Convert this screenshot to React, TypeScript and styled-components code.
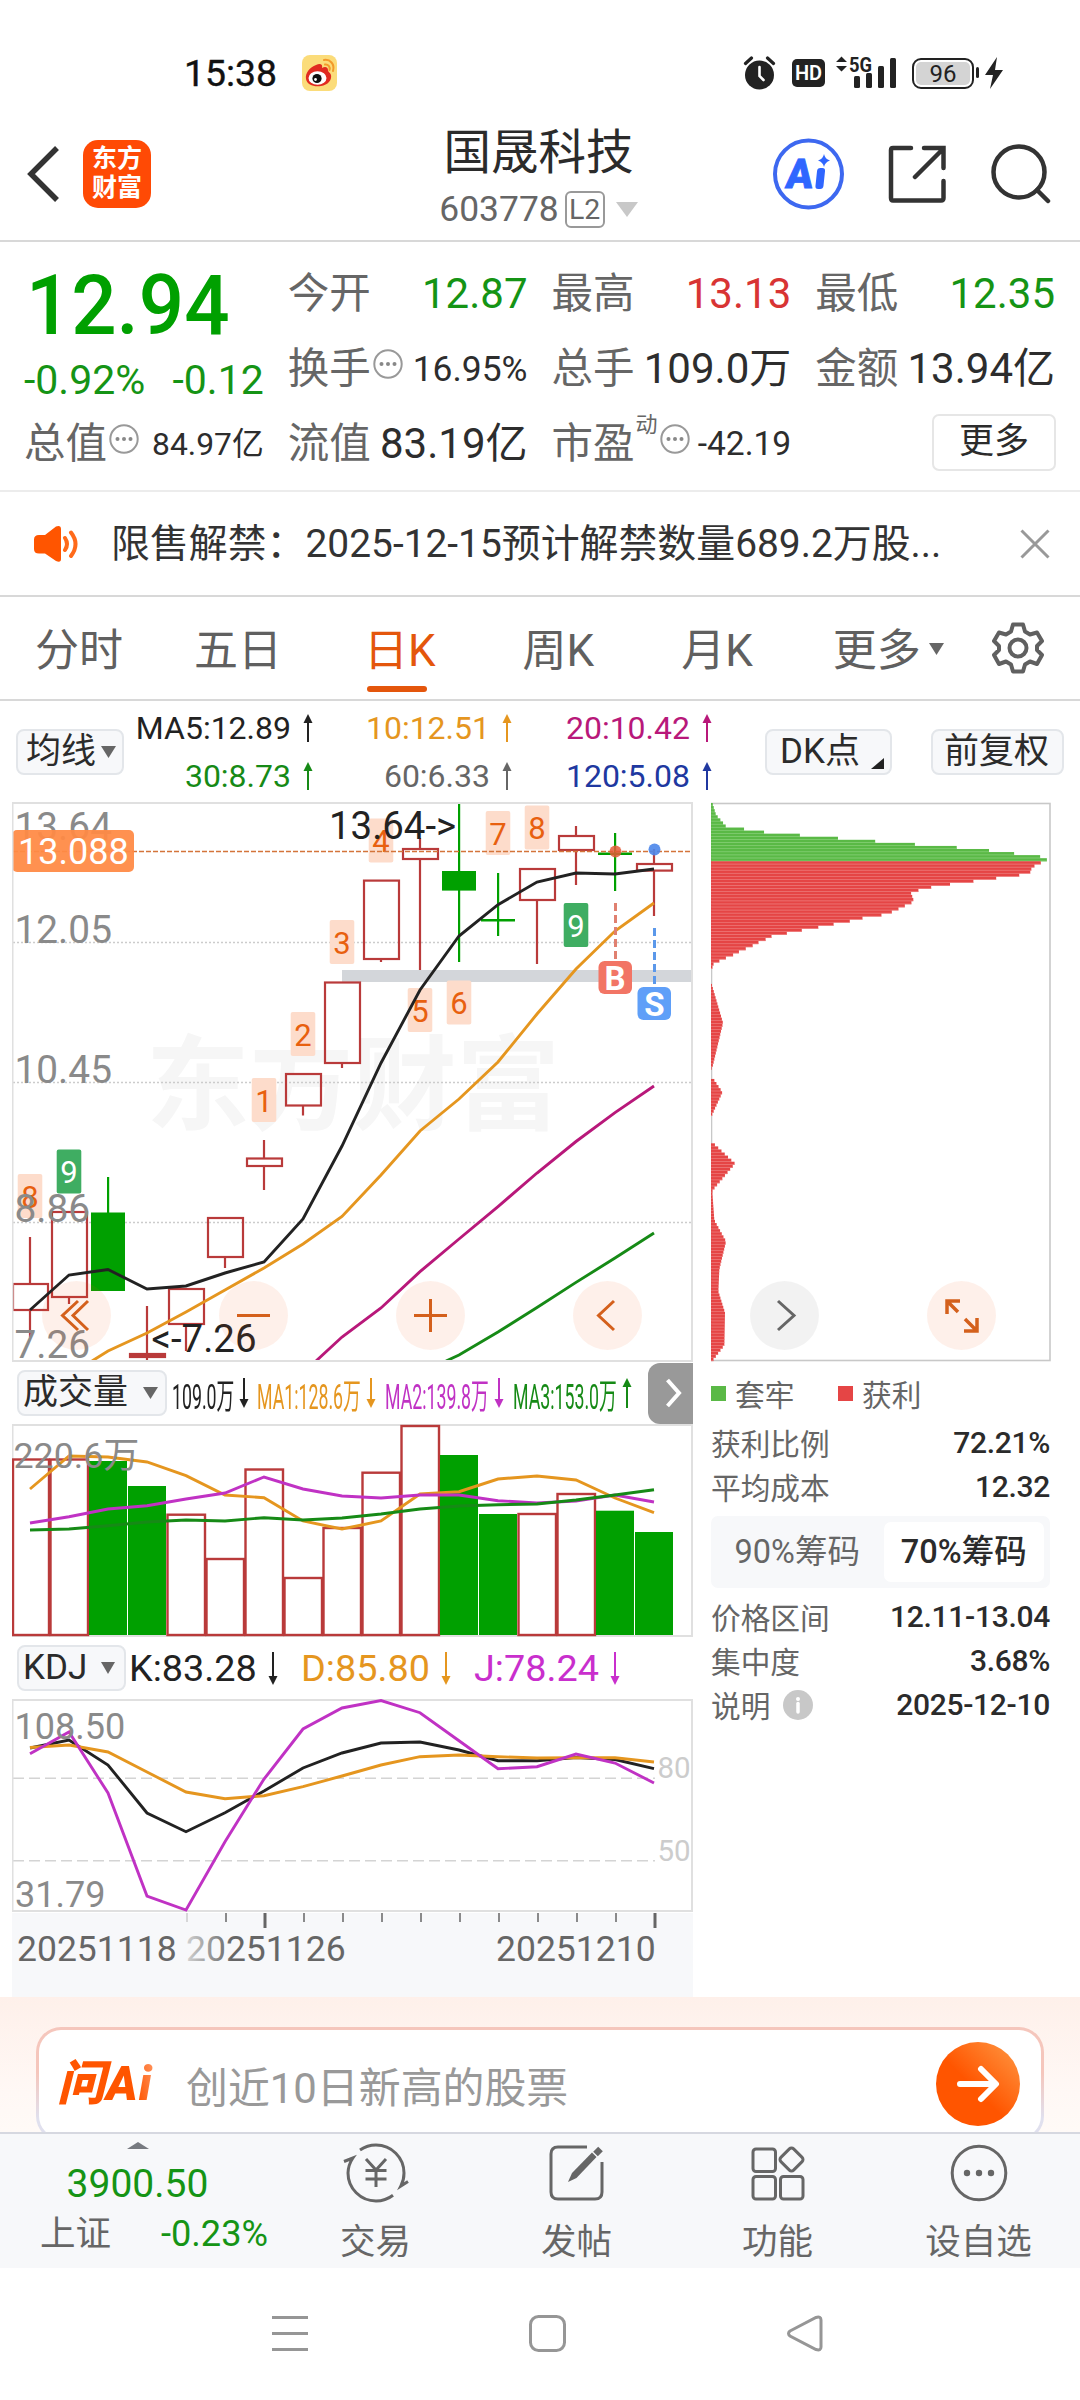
import React from "react";
import styled, { createGlobalStyle } from "styled-components";

const SANS = `Roboto, "Noto Sans CJK SC", sans-serif`;
const RED = "#b93a3a";
const GREEN = "#00a000";
const ORANGE = "#e5961f";

const Global = createGlobalStyle`
  * { box-sizing: border-box; }
  body { margin: 0; background: #fff; font-family: ${SANS}; color: #333; }
  svg { display: block; flex: none; }
  svg text { font-family: ${SANS}; }
`;

const Screen = styled.div`
  width: 1080px;
  height: 2400px;
  display: flex;
  flex-direction: column;
  overflow: hidden;
  background: #fff;
`;

/* ---------- status bar ---------- */
const StatusBar = styled.div`
  height: 110px;
  padding: 36px 76px 0 184px;
  display: flex;
  align-items: center;
  justify-content: space-between;
`;
const StatusGroup = styled.div<{ $gap: number }>`
  display: flex;
  align-items: center;
  gap: ${(p) => p.$gap}px;
`;
const Clock = styled.span`
  width: 92px;
  font-size: 37.3px;
  line-height: 40px;
  color: #111;
  -webkit-text-stroke: 0.4px #111;
`;
const HdBadge = styled.span`
  width: 33px;
  height: 28px;
  margin-right: 3px;
  border-radius: 5px;
  background: #222;
  color: #fff;
  font-size: 20px;
  font-weight: 600;
  line-height: 28px;
  text-align: center;
`;
const Battery = styled.span`
  width: 62px;
  height: 31px;
  margin-left: 7px;
  padding: 2px;
  border: 2px solid #222;
  border-radius: 9px;
  display: flex;
`;
const BatteryLevel = styled.span`
  flex: 1;
  border-radius: 5px;
  background: #d4d4d4;
  color: #222;
  font-size: 24px;
  line-height: 24px;
  text-align: center;
`;

/* ---------- title bar ---------- */
const TitleBar = styled.header`
  height: 132px;
  padding: 0 29px 3px 26px;
  border-bottom: 2px solid #d8d8d8;
  display: grid;
  grid-template-columns: 1fr auto 1fr;
  align-items: center;
`;
const TitleSide = styled.div<{ $end?: boolean; $gap: number }>`
  display: flex;
  align-items: center;
  gap: ${(p) => p.$gap}px;
  justify-content: ${(p) => (p.$end ? "flex-end" : "flex-start")};
`;
const BrandLogo = styled.div`
  width: 68px;
  height: 68px;
  border-radius: 15px;
  background: #ff4a05;
  color: #fff;
  font-size: 25px;
  font-weight: 700;
  line-height: 29px;
  text-align: center;
  padding-top: 4px;
`;
const TitleText = styled.div`
  align-self: start;
  padding-top: 13px;
  text-align: center;
`;
const StockName = styled.div`
  font-size: 47.5px;
  line-height: 60px;
  color: #2b2b2b;
`;
const CodeRow = styled.div`
  height: 52px;
  display: flex;
  align-items: center;
  font-size: 35.4px;
  color: #666;
`;
const LevelBadge = styled.span`
  margin-left: 6px;
  margin-right: 11px;
  width: 40px;
  height: 37px;
  border: 2px solid #999;
  border-radius: 6px;
  font-size: 28.5px;
  line-height: 33px;
  text-align: center;
`;

/* ---------- quote ---------- */
const Quote = styled.section`
  height: 250px;
  padding: 14px 25px 0 24px;
  border-bottom: 2px solid #ececec;
  display: grid;
  grid-template-columns: repeat(4, 1fr);
  grid-template-rows: repeat(3, 75px);
  column-gap: 24px;
`;
const PriceBlock = styled.div`
  grid-row: 1 / span 2;
  color: ${GREEN};
`;
const Price = styled.div`
  height: 98px;
  padding: 1px 0 0 2px;
  font-size: 84px;
  font-weight: 500;
  line-height: 98px;
  transform: scaleX(0.95);
  transform-origin: left center;
`;
const Change = styled.div`
  display: flex;
  justify-content: space-between;
  font-size: 41px;
  line-height: 52px;
  color: #159415;
`;
const Stat = styled.div`
  display: flex;
  align-items: center;
  white-space: nowrap;
  line-height: 50px;
`;
const StatLabel = styled.span`
  font-size: 41.5px;
  color: #666;
`;
const StatSup = styled.sup`
  font-size: 22px;
  line-height: 22px;
  margin: 0 0 38px 1px;
  color: #666;
`;
const StatValue = styled.span<{ $size?: number; $color?: string }>`
  margin-left: auto;
  font-size: ${(p) => p.$size ?? 42}px;
  color: ${(p) => p.$color ?? "#2d2d2d"};
`;
const TipIcon = styled.svg`
  margin: 0 0 9px 2px;
`;
const MoreButton = styled.button`
  justify-self: end;
  align-self: center;
  width: 124px;
  height: 57px;
  margin: -3px -1px 0 0;
  padding: 0;
  border: 2px solid #e6e6e6;
  border-radius: 7px;
  background: #fff;
  font: 35px/50px ${SANS};
  color: #2b2b2b;
`;

/* ---------- notice ---------- */
const Notice = styled.section`
  height: 105px;
  padding: 0 30px 0 34px;
  border-bottom: 2px solid #d8d8d8;
  display: flex;
  align-items: center;
`;
const NoticeText = styled.span`
  flex: 1;
  margin-left: 32px;
  font-size: 38.9px;
  line-height: 50px;
  white-space: nowrap;
`;

/* ---------- tabs ---------- */
const Tabs = styled.nav`
  height: 104px;
  padding: 0 36px 0 35px;
  border-bottom: 2px solid #d8d8d8;
  display: flex;
  align-items: stretch;
`;
const Tab = styled.div<{ $active?: boolean; $gap: number }>`
  margin-right: ${(p) => p.$gap}px;
  padding-top: 22px;
  display: flex;
  flex-direction: column;
  align-items: flex-start;
  justify-content: space-between;
  font-size: 44px;
  line-height: 64px;
  white-space: nowrap;
  color: ${(p) => (p.$active ? "#e4560c" : "#606060")};
  &::after {
    content: "";
    width: 60px;
    height: 6px;
    margin: 0 0 7px 3px;
    border-radius: 3px;
    background: ${(p) => (p.$active ? "#e4560c" : "transparent")};
  }
`;
const TabCaret = styled.div`
  padding-top: 46px;
  margin-right: 48px;
`;
const TabGear = styled.div`
  padding-top: 25px;
`;

/* ---------- moving average bar ---------- */
const AverageBar = styled.section`
  height: 101px;
  padding: 0 16px;
  display: flex;
  align-items: center;
`;
const Chip = styled.button<{ $w: number; $pad?: number; $gap?: string }>`
  width: ${(p) => p.$w}px;
  height: 46px;
  margin-left: ${(p) => p.$gap ?? "0"};
  padding: 0 0 0 ${(p) => p.$pad ?? 8}px;
  border: 2px solid #e3e6ea;
  border-radius: 8px;
  background: #f7f8fa;
  display: flex;
  align-items: center;
  flex: none;
  font: 35px/42px ${SANS};
  color: #2b2b2b;
  white-space: nowrap;
`;
const Averages = styled.div`
  flex: none;
  margin-left: 6px;
  display: grid;
  grid-template-columns: 184px 199px 200px;
  grid-template-rows: 48px 48px;
`;
const Average = styled.div<{ $color: string }>`
  display: flex;
  align-items: center;
  justify-content: flex-end;
  gap: 11px;
  font-size: 32px;
  color: ${(p) => p.$color};
`;
const Corner = styled.span`
  align-self: flex-end;
  margin: 0 0 4px 11px;
  border-left: 13px solid transparent;
  border-bottom: 11px solid #222;
`;

/* ---------- charts ---------- */
const Main = styled.main`
  height: 1195px;
  padding-left: 12px;
  display: flex;
`;
const LeftColumn = styled.div`
  width: 681px;
`;
const RightColumn = styled.div`
  width: 341px;
  margin-left: 18px;
`;
const ChartStack = styled.div`
  position: relative;
`;
const ChartButtons = styled.div<{ $left: number }>`
  position: absolute;
  left: ${(p) => p.$left}px;
  bottom: 12px;
  display: flex;
  gap: 108px;
`;
const RoundButton = styled.button<{ $gray?: boolean }>`
  width: 69px;
  height: 69px;
  padding: 0;
  border: 0;
  border-radius: 50%;
  background: ${(p) => (p.$gray ? "rgba(0,0,0,0.05)" : "rgba(240,90,20,0.09)")};
`;
const IndicatorBar = styled.div`
  height: 62px;
  padding-left: 5px;
  display: flex;
  align-items: center;
`;
const Squeezed = styled.div<{ $w: number; $gap: number; $color: string }>`
  width: ${(p) => p.$w}px;
  margin-left: ${(p) => p.$gap}px;
  display: flex;
  align-items: center;
  justify-content: space-between;
  color: ${(p) => p.$color};
`;
const SqueezedText = styled.span`
  width: 0;
  font-size: 35.5px;
  white-space: nowrap;
  transform: scaleX(0.5);
  transform-origin: left center;
`;
const NextButton = styled.button`
  margin-left: auto;
  width: 45px;
  height: 61px;
  padding: 0 0 0 17px;
  border: 0;
  border-radius: 12px 0 0 12px;
  background: #999;
`;
const Reading = styled.div<{ $w: number; $gap: number; $color: string }>`
  width: ${(p) => p.$w}px;
  margin-left: ${(p) => p.$gap}px;
  display: flex;
  align-items: center;
  justify-content: space-between;
  font-size: 37.8px;
  white-space: nowrap;
  color: ${(p) => p.$color};
`;

/* ---------- chips info ---------- */
const Legend = styled.div`
  height: 58px;
  padding-top: 4px;
  display: flex;
  align-items: center;
  font-size: 29.7px;
  color: #666;
`;
const Swatch = styled.span<{ $color: string }>`
  width: 15px;
  height: 15px;
  margin-right: 9px;
  background: ${(p) => p.$color};
`;
const LegendName = styled.span`
  width: 103px;
`;
const InfoRow = styled.div`
  height: 44.3px;
  padding-right: 2px;
  display: flex;
  align-items: center;
  justify-content: space-between;
  font-size: 29.7px;
  color: #666;
`;
const InfoLabel = styled.span`
  display: flex;
  align-items: center;
  gap: 13px;
`;
const InfoValue = styled.b`
  font-size: 30px;
  font-weight: 500;
  letter-spacing: -0.3px;
  color: #2b2b2b;
`;
const Segments = styled.div`
  width: 339px;
  height: 72px;
  margin: 7.5px 0 6px;
  padding: 6px;
  border-radius: 7px;
  background: #f7f8fa;
  display: flex;
`;
const Segment = styled.div<{ $active?: boolean }>`
  flex: 1;
  padding-right: ${(p) => (p.$active ? 0 : 6)}px;
  border-radius: 7px;
  background: ${(p) => (p.$active ? "#fff" : "transparent")};
  color: ${(p) => (p.$active ? "#2b2b2b" : "#666")};
  font-weight: ${(p) => (p.$active ? 500 : 400)};
  font-size: 32.5px;
  line-height: 60px;
  text-align: center;
  white-space: nowrap;
`;

/* ---------- assistant bar ---------- */
const Assistant = styled.section`
  height: 135px;
  padding: 30px 36px 0;
  overflow: hidden;
  background: linear-gradient(#fef0ea, #fff8f5 70%, #fffaf7);
  flex: none;
`;
const AssistantFrame = styled.div`
  height: 114px;
  padding: 3px;
  border-radius: 25px;
  background: linear-gradient(#f5c6bc 40%, #e0e0ee 80%);
`;
const AssistantBox = styled.div`
  height: 108px;
  padding: 0 21px;
  border-radius: 22px;
  background: #fff;
  display: flex;
  align-items: center;
`;
const AskLogo = styled.span`
  width: 108px;
  margin-left: -5px;
  padding-left: 2px;
  font-size: 48px;
  line-height: 56px;
  font-weight: 900;
  font-style: italic;
  letter-spacing: 1px;
  white-space: nowrap;
  color: transparent;
  background: linear-gradient(75deg, #ff5500 70%, #ffa070 95%);
  background-clip: text;
  -webkit-background-clip: text;
`;
const Placeholder = styled.span`
  flex: 1;
  margin-left: 23px;
  font-size: 41.9px;
  color: #999;
`;
const GoButton = styled.button`
  width: 84px;
  height: 84px;
  padding: 0 0 0 20px;
  margin-bottom: 1px;
  border: 0;
  border-radius: 50%;
  background: linear-gradient(45deg, #ff5500 45%, #ff9a45);
`;

/* ---------- bottom bar ---------- */
const BottomBar = styled.nav`
  height: 136px;
  padding-right: 1px;
  border-top: 2px solid #d6d8e0;
  background: #f7f8fa;
  display: grid;
  grid-template-columns: 275px repeat(4, 201px);
  flex: none;
`;
const IndexCell = styled.div`
  padding-top: 8px;
  display: flex;
  flex-direction: column;
  align-items: center;
  color: #159415;
`;
const IndexValue = styled.div`
  margin-top: 10px;
  font-size: 39px;
  line-height: 50px;
`;
const IndexRow = styled.div`
  align-self: stretch;
  padding: 1px 7px 0 40px;
  display: flex;
  justify-content: space-between;
  font-size: 36.2px;
  line-height: 48px;
`;
const IndexName = styled.span`
  color: #666;
  font-size: 35.5px;
`;
const NavCell = styled.div`
  padding-top: 8px;
  display: flex;
  flex-direction: column;
  align-items: center;
  font-size: 35.5px;
  line-height: 50px;
  color: #666;
  gap: 14px;
`;
const SystemBar = styled.div`
  flex: 1;
  padding: 0 257px 1px 272px;
  display: flex;
  align-items: center;
  justify-content: space-between;
`;

const Caret = ({ w = 14, h = 12, color = "#666" }: { w?: number; h?: number; color?: string }) => (
  <svg width={w} height={h}>
    <path d={`M0 0H${w}L${w / 2} ${h}Z`} fill={color} />
  </svg>
);

const Arrow = ({ down, h = 28, w = 12 }: { down?: boolean; h?: number; w?: number }) => (
  <svg width={w} height={h} viewBox={`0 0 ${w} ${h}`}>
    <g transform={down ? `rotate(180 ${w / 2} ${h / 2})` : undefined}>
      <path d={`M${w / 2} 4V${h}`} stroke="currentColor" strokeWidth="2" />
      <path d={`M${w / 2} 0L${w / 2 + 4.5} 9H${w / 2 - 4.5}Z`} fill="currentColor" />
    </g>
  </svg>
);

const Tip = () => (
  <TipIcon width="30" height="30" viewBox="0 0 30 30">
    <circle cx="15" cy="15" r="13.7" fill="none" stroke="#999" strokeWidth="2" />
    {[8.5, 15, 21.5].map((x) => (
      <circle key={x} cx={x} cy="15" r="2" fill="#888" />
    ))}
  </TipIcon>
);

const xs = Array.from({ length: 17 }, (_, i) => 30 + i * 39);
const line = (ys: number[], start = 0) => ys.map((y, i) => `${xs[i + start]},${y}`).join(" ");

type Candle = { up: boolean; top: number; bottom: number; high: number; low: number };
const candles: Candle[] = [
  [1, 1284, 1310, 1237, 1337],
  [1, 1212, 1297, 1212, 1304],
  [0, 1212.5, 1291, 1177, 1291],
  [1, 1354, 1357, 1306, 1361],
  [1, 1289, 1324, 1289, 1351],
  [1, 1218, 1257, 1218, 1268],
  [1, 1158.5, 1166, 1140, 1190],
  [1, 1074, 1105.5, 1074, 1115.5],
  [1, 982.5, 1063, 982.5, 1068],
  [1, 880.6, 959, 880.6, 962],
  [1, 849, 859, 838, 970],
  [0, 871, 890.6, 803, 962],
  [0, 919, 921.5, 873, 936],
  [1, 869, 900, 868, 964],
  [1, 836, 850, 826, 885],
  [0, 852.5, 855, 833, 891],
  [1, 864, 870.6, 849, 916],
].map(([u, top, bottom, high, low]) => ({ up: !!u, top, bottom, high, low }));

const CandleShape = ({ c, x }: { c: Candle; x: number }) =>
  c.up ? (
    <g stroke={RED} strokeWidth="2.2" fill="none">
      <path d={`M${x} ${c.high}V${c.top}M${x} ${c.bottom}V${c.low}`} />
      <rect x={x - 17} y={c.top} width="35" height={c.bottom - c.top} fill={c.bottom - c.top < 4 ? RED : "none"} />
    </g>
  ) : (
    <g fill={GREEN}>
      <rect x={x - 1} y={c.high} width="2.2" height={c.low - c.high} />
      <rect x={x - 17} y={c.top} width="34" height={c.bottom - c.top} />
    </g>
  );

const tags: [string, number, number, boolean?][] = [
  ["8", 30, 1174],
  ["9", 69, 1149.5, true],
  ["1", 264, 1078],
  ["2", 303, 1012],
  ["3", 342, 920],
  ["4", 381, 818.5],
  ["5", 420, 988],
  ["6", 459, 980.5],
  ["7", 498, 811],
  ["8", 537, 805.5],
  ["9", 576, 903, true],
];

const PriceChart = () => (
  <svg width="681" height="560" viewBox="12 802 681 560">
    <text x="146" y="1122" fontSize="103.5" fontWeight="700" fill="#f6f6f6">东方财富</text>
    <g stroke="#ccc" strokeWidth="1.3" strokeDasharray="2 2">
      <path d="M13 942.5H692M13 1082.5H692M13 1222.5H692" />
    </g>
    <rect x="342" y="970" width="350" height="12" fill="#d3d6da" />
    {tags.map(([t, x, y, solid], i) => (
      <g key={i}>
        <rect x={x - 12.3} y={y} width="24.6" height="44" rx="2" fill={solid ? "#3fad62" : "#fddccb"} />
        <text x={x} y={y + 33.5} fontSize="31" textAnchor="middle" fill={solid ? "#fff" : "#e8600f"}>{t}</text>
      </g>
    ))}
    {candles.map((c, i) => (
      <CandleShape key={i} c={c} x={xs[i]} />
    ))}
    <path d="M13 851.5H692" stroke="#d4743a" strokeWidth="1.4" strokeDasharray="5 2" />
    <g fill="none" strokeWidth="2.9">
      <polyline stroke="#222" points={line([1310, 1275, 1269.5, 1289, 1286, 1273, 1262, 1219, 1146, 1063, 990, 936, 904.7, 882, 873, 874, 869])} />
      <polyline stroke={ORANGE} points={"92,1361 " + line([1351, 1333, 1312, 1290, 1268, 1244, 1216.5, 1175, 1131, 1099, 1062, 1014, 969, 931, 903], 2)} />
      <polyline stroke="#b8187a" points={"316,1361 " + line([1337, 1308, 1271.7, 1239, 1206.6, 1173, 1141.5, 1112.6, 1086], 8)} />
      <polyline stroke="#168a16" points={"446,1361 " + line([1355, 1332, 1307.6, 1282.4, 1258, 1233], 11)} />
    </g>
    <circle cx="615.5" cy="851.5" r="6" fill="#e55a38" opacity="0.85" />
    <circle cx="654.5" cy="849.5" r="6" fill="#4b86ea" opacity="0.9" />
    <path d="M615.5 903V960" stroke="#e08070" strokeWidth="3" strokeDasharray="8 4" />
    <path d="M654.5 928V985" stroke="#5b98ea" strokeWidth="3" strokeDasharray="8 4" />
    <rect x="598.5" y="961" width="33.5" height="33" rx="6" fill="#f27565" />
    <rect x="637.5" y="987" width="33.5" height="33" rx="6" fill="#5f9ff8" />
    <g fontSize="33" fontWeight="700" fill="#fff" textAnchor="middle">
      <text x="615" y="989.5">B</text>
      <text x="654.5" y="1015.5">S</text>
    </g>
    <g fontSize="38.8" fill="#8a8a8a">
      <text x="14.5" y="839.5">13.64</text>
      <text x="14.5" y="943">12.05</text>
      <text x="14.5" y="1083">10.45</text>
      <text x="14.5" y="1222">8.86</text>
      <text x="14.5" y="1357.5">7.26</text>
    </g>
    <rect x="12" y="830" width="122" height="42" rx="5" fill="#ff8a45" fillOpacity="0.94" />
    <text x="18" y="864" fontSize="36" fill="#fff">13.088</text>
    <g fontSize="38.4" fill="#222">
      <text x="329" y="838.5">13.64-&gt;</text>
      <text x="151.5" y="1352">&lt;-7.26</text>
    </g>
    <rect x="12.5" y="803" width="679.5" height="558" fill="none" stroke="#e0e0e0" strokeWidth="2" />
  </svg>
);

/* Cost distribution: [vertical position, width] knots on a 1507-unit tall scale. */
const profile: [number, number][] = [
  [38, 4], [70, 15], [101, 45], [110, 111], [119, 176], [127, 298], [136, 418], [145, 540], [153, 660],
  [161, 782], [169, 860], [178, 939], [186, 1018], [195, 1000], [203, 981], [211, 963], [229, 956],
  [237, 886], [246, 815], [254, 744], [263, 673], [271, 636], [279, 599], [304, 609], [312, 589],
  [321, 569], [329, 549], [338, 529], [346, 465], [355, 427], [363, 379], [372, 330], [380, 281],
  [389, 233], [397, 184], [406, 165], [414, 144], [423, 125], [431, 105], [439, 85], [448, 66],
  [456, 45], [464, 26], [473, 7], [482, 4], [488, 0], [526, 0], [528, 2], [632, 36], [752, 4], [756, 0],
  [779, 0], [782, 6], [819, 34], [880, 3], [884, 0], [954, 0], [958, 8], [1012, 72], [1083, 5],
  [1090, 4], [1165, 10], [1222, 45], [1297, 25], [1357, 22], [1415, 42], [1502, 40], [1545, 4],
];
const widthAt = (y: number) => {
  const i = profile.findIndex((p) => p[0] >= y);
  if (i <= 0) return i === 0 ? profile[0][1] : 4;
  const [y0, w0] = profile[i - 1];
  const [y1, w1] = profile[i];
  return w0 + ((w1 - w0) * (y - y0)) / (y1 - y0);
};
const bars = Array.from({ length: 182 }, (_, i) => {
  const unit = 38 + (i + 0.5) * 8.28;
  return { y: 803 + i * 3.066, w: widthAt(unit) / 3, green: unit < 199 };
});

const CostChart = () => (
  <svg width="341" height="560" viewBox="711 802 341 560">
    <rect x="711.5" y="803.5" width="338.5" height="557" fill="none" stroke="#c8c8c8" strokeWidth="1.6" />
    {bars.map((b, i) =>
      b.w > 0.3 ? (
        <g key={i}>
          <rect x="711" y={b.y} width={b.w} height="3.1" fill={b.green ? "#5ab946" : "#e54545"} />
          <rect x="711" y={b.y + 2.5} width={b.w} height="0.7" fill={b.green ? "#8fd47f" : "#ef8585"} />
        </g>
      ) : null
    )}
  </svg>
);

const volumes: [number, boolean][] = [
  [1459.5, true], [1459.5, true], [1461, false], [1486, false], [1514.7, true], [1559, true],
  [1469.5, true], [1578, true], [1528, true], [1472.7, true], [1426, true], [1455, false],
  [1514, false], [1514, true], [1494, true], [1510.7, false], [1532, false],
];

const VolumeChart = () => (
  <svg width="681" height="213" viewBox="12 1424 681 213">
    <rect x="12.5" y="1425" width="679.5" height="211" fill="none" stroke="#e0e0e0" strokeWidth="2" />
    {volumes.map(([y, up], i) =>
      up ? (
        <rect key={i} x={Math.max(xs[i] - 18.5, 13)} y={y} width={i ? 37.5 : 36} height={1635 - y} fill="none" stroke={RED} strokeWidth="2.4" />
      ) : (
        <rect key={i} x={xs[i] - 19} y={y} width="38" height={1635 - y} fill={GREEN} />
      )
    )}
    <g fill="none" strokeWidth="2.9">
      <polyline stroke={ORANGE} points={line([1489, 1456, 1457, 1462, 1475.7, 1495, 1497.7, 1521, 1529, 1521, 1494, 1491.7, 1479, 1476, 1480, 1498, 1512.7])} />
      <polyline stroke="#c032c4" points={line([1523, 1516.7, 1509, 1505.7, 1499, 1493, 1477, 1489, 1496, 1498, 1495, 1495, 1500.7, 1503, 1501, 1495, 1502])} />
      <polyline stroke="#168a16" points={line([1530, 1529, 1525.7, 1522, 1520, 1521, 1517.7, 1520, 1518, 1514, 1509, 1506, 1504.7, 1504, 1500, 1495, 1489.7])} />
    </g>
    <text x="13.5" y="1468" fontSize="35.8" fill="#8a8a8a">220.6万</text>
  </svg>
);

const KdjChart = () => (
  <svg width="681" height="213" viewBox="12 1699 681 213">
    <g stroke="#d4d4d4" strokeWidth="1.6" strokeDasharray="11 5">
      <path d="M13 1778.3H655M13 1860.8H655" />
    </g>
    <rect x="12.5" y="1700" width="679.5" height="211" fill="none" stroke="#e0e0e0" strokeWidth="2" />
    <g fontSize="29.500" fill="#ccc">
      <text x="657.5" y="1777.5">80</text>
      <text x="657.5" y="1861">50</text>
    </g>
    <g fill="none" strokeWidth="2.9">
      <polyline stroke="#222" points={line([1748, 1740, 1765, 1813, 1831.7, 1812.7, 1791, 1768, 1753, 1743, 1742, 1750, 1760.7, 1760.7, 1757.5, 1759.5, 1768.7])} />
      <polyline stroke={ORANGE} points={line([1747.5, 1745, 1752, 1772, 1792, 1798.7, 1795.7, 1786.7, 1776, 1765, 1756.7, 1755, 1756.7, 1758, 1757.7, 1757.7, 1762])} />
      <polyline stroke="#c032c4" points={line([1753.7, 1732, 1793, 1896, 1910, 1841.7, 1779, 1729, 1708, 1700.5, 1712.7, 1740.7, 1768.7, 1766.7, 1754, 1763, 1783])} />
    </g>
    <g fontSize="36" fill="#8a8a8a">
      <text x="14.5" y="1739">108.50</text>
      <text x="15" y="1906.5">31.79</text>
    </g>
  </svg>
);

const DateAxis = () => (
  <svg width="681" height="85" viewBox="12 1912 681 85">
    <defs>
      <linearGradient id="dateFade" gradientUnits="userSpaceOnUse" x1="186" y1="0" x2="232" y2="0">
        <stop offset="0" stopColor="#d2d2d2" />
        <stop offset="1" stopColor="#666" />
      </linearGradient>
    </defs>
    <rect x="12" y="1913" width="681" height="84" fill="#f7f8fa" />
    {xs.slice(4).map((x, i) => {
      const major = i === 2 || i === 12;
      return (
        <path
          key={x}
          d={`M${x + 1} 1913V${major ? 1928 : 1922}`}
          stroke={i === 0 ? "#ccc" : "#666"}
          strokeWidth={major ? 3 : 1.5}
        />
      );
    })}
    <g fontSize="35.5" fill="#666">
      <text x="17" y="1960.5">20251118</text>
      <text x="186" y="1960.5" fill="url(#dateFade)">20251126</text>
      <text x="496" y="1960.5">20251210</text>
    </g>
  </svg>
);

const Glyph = ({ d, w = 3, color = "#d4601c" }: { d: string; w?: number; color?: string }) => (
  <svg width="69" height="69" viewBox="0 0 69 69">
    <path d={d} fill="none" stroke={color} strokeWidth={w} />
  </svg>
);

const averages: [string, string][] = [
  ["MA5:12.89", "#222"],
  ["10:12.51", ORANGE],
  ["20:10.42", "#b8187a"],
  ["30:8.73", "#168a16"],
  ["60:6.33", "#666"],
  ["120:5.08", "#2038a0"],
];

const StatusIcons = () => (
  <StatusGroup $gap={8}>
    <svg width="41" height="36" viewBox="0 0 41 36">
      <path d="M2.500 8.500L8.500 3M30.500 8.500L24.500 3" stroke="#222" strokeWidth="3.200" strokeLinecap="round" />
      <circle cx="16.500" cy="20" r="14.500" fill="#222" />
      <path d="M16.500 12V21L20.500 25" fill="none" stroke="#fff" strokeWidth="2.600" strokeLinecap="round" />
    </svg>
    <HdBadge>HD</HdBadge>
    <svg width="61" height="38" viewBox="835 53 61 38">
      <path d="M835 61L840.5 55.5L846 61ZM835 65L840.5 70.5L846 65Z" fill="#222" />
      <text x="848" y="71" fontSize="20" fontWeight="700" fill="#222" textLength="23" lengthAdjust="spacingAndGlyphs">5G</text>
      <g fill="#222">
        <rect x="853" y="75" width="6" height="12" rx="1.5" />
        <rect x="865" y="72" width="6" height="15" rx="1.5" />
        <rect x="877" y="65" width="6" height="22" rx="1.5" />
        <rect x="889" y="57" width="6" height="30" rx="1.5" />
      </g>
    </svg>
    <StatusGroup $gap={2}>
      <Battery>
        <BatteryLevel>96</BatteryLevel>
      </Battery>
      <svg width="28" height="32" viewBox="0 0 28 32">
        <rect x="0" y="10" width="3" height="11" rx="1.500" fill="#222" />
        <path d="M21 0L9 18H17L14 32L27 13H19Z" fill="#222" />
      </svg>
    </StatusGroup>
  </StatusGroup>
);

const Weibo = () => (
  <svg width="35" height="36" viewBox="0 0 35 36">
    <rect width="35" height="36" rx="8" fill="#fbdc7a" />
    <path d="M14 10C8 12 3 18 4 24C5 30 12 32 19 31C26 30 30 25 29 20C28 17 26 17 26 15C26 12 23 11 20 13C21 9 18 8 14 10Z" fill="#e12a20" />
    <ellipse cx="15.500" cy="23" rx="9" ry="6.800" fill="#fff" />
    <circle cx="15" cy="23.500" r="4.600" fill="#111" />
    <circle cx="13.500" cy="24.500" r="1.400" fill="#fff" />
    <path d="M22 5C28 4 33 9 31 16M23 9.500C26 9 28.500 12 27.500 15" fill="none" stroke="#f39a2b" strokeWidth="2" strokeLinecap="round" />
  </svg>
);

export default function App() {
  return (
    <Screen>
      <Global />
      <StatusBar>
        <StatusGroup $gap={26}>
          <Clock>15:38</Clock>
          <Weibo />
        </StatusGroup>
        <StatusIcons />
      </StatusBar>

      <TitleBar>
        <TitleSide $gap={23}>
          <svg width="34" height="60" viewBox="0 0 34 60">
            <path d="M31 4L5 30L31 56" fill="none" stroke="#333" strokeWidth="5.500" />
          </svg>
          <BrandLogo>
            东方
            <br />
            财富
          </BrandLogo>
        </TitleSide>
        <TitleText>
          <StockName>国晟科技</StockName>
          <CodeRow>
            603778
            <LevelBadge>L2</LevelBadge>
            <Caret w={22} h={15} color="#c8c8c8" />
          </CodeRow>
        </TitleText>
        <TitleSide $end $gap={44}>
          <svg width="71" height="72" viewBox="0 0 71 72">
            <circle cx="35.500" cy="36" r="33.500" fill="none" stroke="#3d68f0" strokeWidth="4" />
            <g transform="skewX(-6)">
              <text x="17" y="50.500" fontSize="41" fontWeight="900" fill="#2f66ff" stroke="#2f66ff" strokeWidth="0.800" textLength="27" lengthAdjust="spacingAndGlyphs">A</text>
              <rect x="47.500" y="30" width="8" height="21" rx="3" fill="#2f66ff" />
            </g>
            <path d="M51 16Q52 21 57 22.500Q52 24 51 29Q50 24 45 22.500Q50 21 51 16Z" fill="#2f66ff" />
          </svg>
          <svg width="58" height="58" viewBox="0 0 58 58">
            <path d="M23 3H5Q3 3 3 5V53Q3 55.500 5 55.500H53Q55.500 55.500 55.500 53V36" fill="none" stroke="#333" strokeWidth="4.500" strokeLinecap="round" />
            <path d="M36 3H55.500V23M55 4L27 32" fill="none" stroke="#333" strokeWidth="4.500" strokeLinecap="round" />
          </svg>
          <svg width="61" height="61" viewBox="0 0 61 61">
            <circle cx="29" cy="29" r="25.500" fill="none" stroke="#333" strokeWidth="4.500" />
            <path d="M47 47L58 58" stroke="#333" strokeWidth="4.500" strokeLinecap="round" />
          </svg>
        </TitleSide>
      </TitleBar>

      <Quote>
        <PriceBlock>
          <Price>12.94</Price>
          <Change>
            <span>-0.92%</span>
            <span>-0.12</span>
          </Change>
        </PriceBlock>
        <Stat><StatLabel>今开</StatLabel><StatValue $color="#159415">12.87</StatValue></Stat>
        <Stat><StatLabel>最高</StatLabel><StatValue $color="#d83434">13.13</StatValue></Stat>
        <Stat><StatLabel>最低</StatLabel><StatValue $color="#159415">12.35</StatValue></Stat>
        <Stat><StatLabel>换手</StatLabel><Tip /><StatValue $size={35.4}>16.95%</StatValue></Stat>
        <Stat><StatLabel>总手</StatLabel><StatValue>109.0万</StatValue></Stat>
        <Stat><StatLabel>金额</StatLabel><StatValue>13.94亿</StatValue></Stat>
        <Stat><StatLabel>总值</StatLabel><Tip /><StatValue $size={31.8}>84.97亿</StatValue></Stat>
        <Stat><StatLabel>流值</StatLabel><StatValue>83.19亿</StatValue></Stat>
        <Stat><StatLabel>市盈</StatLabel><StatSup>动</StatSup><Tip /><StatValue $size={33.6}>-42.19</StatValue></Stat>
        <MoreButton>更多</MoreButton>
      </Quote>

      <Notice>
        <svg width="45" height="38" viewBox="0 0 45 38">
          <path d="M5 10H11L22 1.500Q27 0 27 4V34Q27 38 22 36L11 28.500H5Q0 28.500 0 24V14.500Q0 10 5 10Z" fill="#ff5500" />
          <path d="M31 13Q35 19 31 25M37 7.500Q46 19 37 31" fill="none" stroke="#ff6a1a" strokeWidth="4" strokeLinecap="round" />
        </svg>
        <NoticeText>限售解禁：2025-12-15预计解禁数量689.2万股...</NoticeText>
        <svg width="30" height="30" viewBox="0 0 30 30">
          <path d="M1.500 1.500L28.500 28.500M28.500 1.500L1.500 28.500" stroke="#999" strokeWidth="3" />
        </svg>
      </Notice>

      <Tabs>
        <Tab $gap={71}>分时</Tab>
        <Tab $gap={82}>五日</Tab>
        <Tab $gap={87} $active>日K</Tab>
        <Tab $gap={87}>周K</Tab>
        <Tab $gap={80}>月K</Tab>
        <Tab $gap={8}>更多</Tab>
        <TabCaret><Caret w={15} h={12} /></TabCaret>
        <TabGear>
          <svg width="52" height="52" viewBox="0 0 52 52" fill="none" stroke="#606060" strokeWidth="4">
            <path d="M21 2.500H31L33 9.500L38 12.500L45 10.500L50 19L45 24V28L50 33L45 42L38 39.500L33 42.500L31 49.500H21L19 42.500L14 39.500L7 42L2 33L7 28V24L2 19L7 10.500L14 12.500L19 9.500Z" strokeLinejoin="round" />
            <circle cx="26" cy="26" r="8.500" />
          </svg>
        </TabGear>
      </Tabs>

      <AverageBar>
        <Chip $w={108}>
          均线
          <svg width="21" height="12" viewBox="0 0 21 12"><path d="M5 0H20L12.500 12Z" fill="#666" /></svg>
        </Chip>
        <Averages>
          {averages.map(([t, c]) => (
            <Average key={t} $color={c}>
              {t}
              <Arrow />
            </Average>
          ))}
        </Averages>
        <Chip $w={127} $pad={13} $gap="auto">DK点<Corner /></Chip>
        <Chip $w={133} $pad={11} $gap="39px">前复权</Chip>
      </AverageBar>

      <Main>
        <LeftColumn>
          <ChartStack>
            <PriceChart />
            <ChartButtons $left={30}>
              <RoundButton><Glyph d="M36 20L20.500 34.500L36 49M46 20L31 34.500L46 49" /></RoundButton>
              <RoundButton><Glyph d="M18 34.500H51" /></RoundButton>
              <RoundButton><Glyph d="M18 34.500H51M34.500 18V51" /></RoundButton>
              <RoundButton><Glyph d="M41 20L25.500 34.500L41 49" /></RoundButton>
            </ChartButtons>
          </ChartStack>
          <IndicatorBar>
            <Chip $w={150} $pad={4}>
              成交量
              <svg width="30" height="12" viewBox="0 0 30 12"><path d="M15 0H30L22.500 12Z" fill="#666" /></svg>
            </Chip>
            <Squeezed $w={78} $gap={5} $color="#222"><SqueezedText>109.0万</SqueezedText><Arrow down h={30} /></Squeezed>
            <Squeezed $w={120} $gap={7} $color={ORANGE}><SqueezedText>MA1:128.6万</SqueezedText><Arrow down h={30} /></Squeezed>
            <Squeezed $w={120} $gap={8} $color="#c032c4"><SqueezedText>MA2:139.8万</SqueezedText><Arrow down h={30} /></Squeezed>
            <Squeezed $w={120} $gap={8} $color="#168a16"><SqueezedText>MA3:153.0万</SqueezedText><Arrow h={30} /></Squeezed>
            <NextButton>
              <svg width="18" height="32" viewBox="0 0 18 32">
                <path d="M2.500 3L14 16L2.500 29" fill="none" stroke="#fff" strokeWidth="4" />
              </svg>
            </NextButton>
          </IndicatorBar>
          <VolumeChart />
          <IndicatorBar>
            <Chip $w={109} $pad={4}>
              KDJ
              <svg width="29" height="12" viewBox="0 0 29 12"><path d="M14 0H28L21 12Z" fill="#666" /></svg>
            </Chip>
            <Reading $w={150} $gap={3} $color="#222">K:83.28<Arrow down h={33} /></Reading>
            <Reading $w={151} $gap={22} $color={ORANGE}>D:85.80<Arrow down h={33} /></Reading>
            <Reading $w={147} $gap={22} $color="#c92fcd">J:78.24<Arrow down h={33} /></Reading>
          </IndicatorBar>
          <KdjChart />
          <DateAxis />
        </LeftColumn>

        <RightColumn>
          <ChartStack>
            <CostChart />
            <ChartButtons $left={39}>
              <RoundButton $gray><Glyph color="#666" d="M28 20L44 34.500L28 49" /></RoundButton>
              <RoundButton><Glyph w={3.5} d="M20 33V20H33M20 20L31 31M50 37V50H37M50 50L38 38" /></RoundButton>
            </ChartButtons>
          </ChartStack>
          <Legend>
            <Swatch $color="#5ab946" />
            <LegendName>套牢</LegendName>
            <Swatch $color="#e54545" />
            <LegendName>获利</LegendName>
          </Legend>
          <InfoRow>获利比例<InfoValue>72.21%</InfoValue></InfoRow>
          <InfoRow>平均成本<InfoValue>12.32</InfoValue></InfoRow>
          <Segments>
            <Segment>90%筹码</Segment>
            <Segment $active>70%筹码</Segment>
          </Segments>
          <InfoRow>价格区间<InfoValue>12.11-13.04</InfoValue></InfoRow>
          <InfoRow>集中度<InfoValue>3.68%</InfoValue></InfoRow>
          <InfoRow>
            <InfoLabel>
              说明
              <svg width="30" height="30" viewBox="0 0 30 30">
                <circle cx="15" cy="15" r="15" fill="#c8c8c8" />
                <circle cx="15" cy="9" r="2" fill="#fff" />
                <path d="M15 13.500V22" stroke="#fff" strokeWidth="3.500" strokeLinecap="round" />
              </svg>
            </InfoLabel>
            <InfoValue>2025-12-10</InfoValue>
          </InfoRow>
        </RightColumn>
      </Main>

      <Assistant>
        <AssistantFrame>
          <AssistantBox>
            <AskLogo>问Ai</AskLogo>
            <Placeholder>创近10日新高的股票</Placeholder>
            <GoButton>
              <svg width="44" height="40" viewBox="0 0 44 40">
                <path d="M4 20H38M25 5L40 20L25 35" fill="none" stroke="#fff" strokeWidth="6" strokeLinecap="round" strokeLinejoin="round" />
              </svg>
            </GoButton>
          </AssistantBox>
        </AssistantFrame>
      </Assistant>

      <BottomBar>
        <IndexCell>
          <svg width="22" height="7"><path d="M0 7L11 0L22 7Z" fill="#777a80" /></svg>
          <IndexValue>3900.50</IndexValue>
          <IndexRow>
            <IndexName>上证</IndexName>
            <span>-0.23%</span>
          </IndexRow>
        </IndexCell>
        <NavCell>
          <svg width="66" height="61" viewBox="0 0 66 61" fill="none" stroke="#666" strokeWidth="3">
            <path d="M17 8A28 28 0 0 1 33 3A28 28 0 0 1 61 31A28 28 0 0 1 57.900 44L65 39.500" />
            <path d="M1 19.500L9.900 16A28 28 0 0 0 5 31A28 28 0 0 0 33 59A28 28 0 0 0 50 53.200" />
            <path d="M23 17L33 28L43 17M33 28V45M22.500 28.500H43.500M22.500 37H43.500" />
          </svg>
          交易
        </NavCell>
        <NavCell>
          <svg width="56" height="61" viewBox="0 0 56 61" fill="none" stroke="#666" strokeWidth="3">
            <path d="M38 5H9Q2 5 2 12V50Q2 57 9 57H46Q53 57 53 50V20" />
            <path d="M19 40L23 31L43 10.500L47.500 15L27.500 36Z" fill="#666" stroke="none" />
            <path d="M46.500 12L51.500 7" strokeWidth="6.500" strokeLinecap="butt" />
          </svg>
          发帖
        </NavCell>
        <NavCell>
          <svg width="54" height="61" viewBox="0 0 54 61" fill="none" stroke="#666" strokeWidth="3">
            <rect x="2" y="7" width="22.500" height="22.500" rx="3" />
            <rect x="2" y="34.500" width="22.500" height="22.500" rx="3" />
            <rect x="29.500" y="34.500" width="22.500" height="22.500" rx="3" />
            <rect x="31.500" y="8.500" width="18" height="18" rx="3" transform="rotate(45 40.500 17.500)" />
          </svg>
          功能
        </NavCell>
        <NavCell>
          <svg width="58" height="61" viewBox="0 0 58 61">
            <circle cx="29" cy="31" r="26.800" fill="none" stroke="#666" strokeWidth="3" />
            {[17, 29, 41].map((x) => (
              <circle key={x} cx={x} cy="31" r="3.200" fill="#666" />
            ))}
          </svg>
          设自选
        </NavCell>
      </BottomBar>

      <SystemBar>
        <svg width="36" height="37" viewBox="0 0 36 37">
          <path d="M0 2.500H36M0 18.500H36M0 34.500H36" stroke="#969696" strokeWidth="3" />
        </svg>
        <svg width="37" height="37" viewBox="0 0 37 37">
          <rect x="1.500" y="1.500" width="34" height="34" rx="8" fill="none" stroke="#969696" strokeWidth="3" />
        </svg>
        <svg width="36" height="37" viewBox="0 0 36 37">
          <path d="M3 16L29 2.500Q34 1 34 5V32Q34 36 29 34.500L3 21Q0 18.500 3 16Z" fill="none" stroke="#969696" strokeWidth="3" />
        </svg>
      </SystemBar>
    </Screen>
  );
}
